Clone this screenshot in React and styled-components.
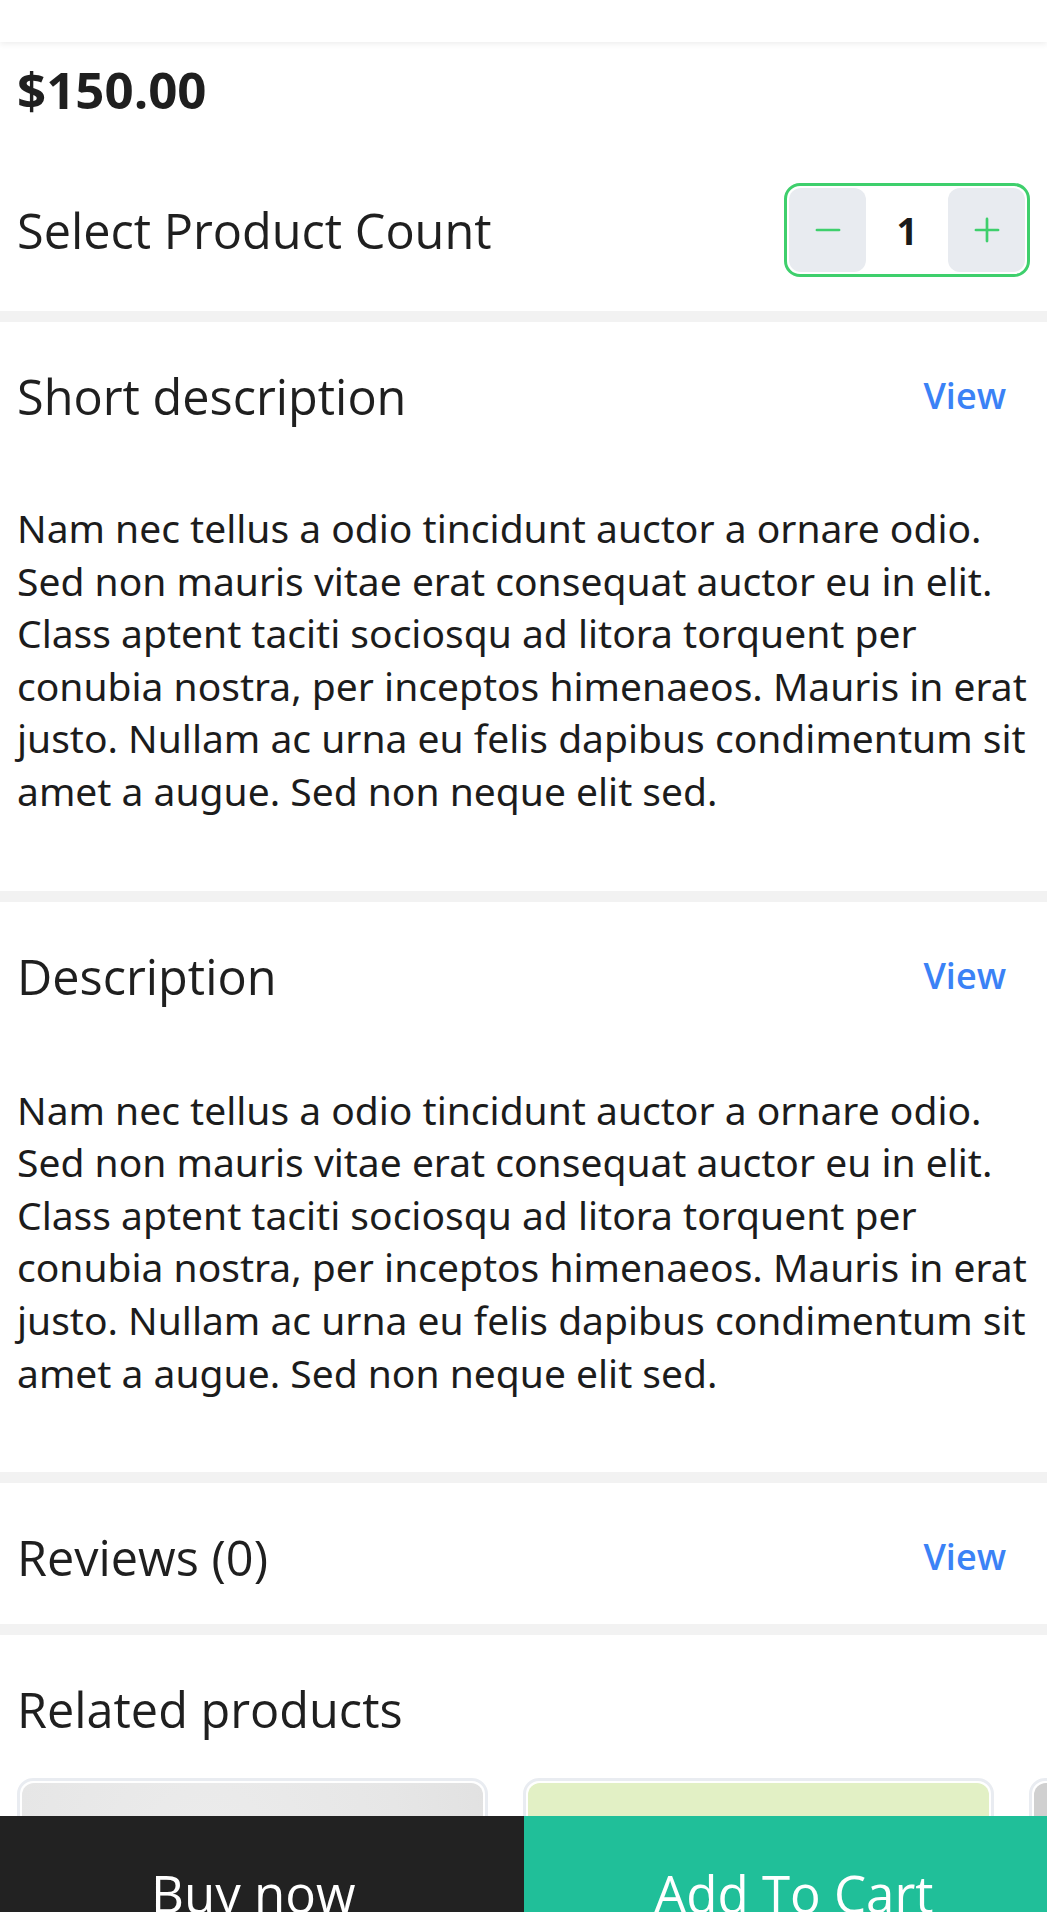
import React, { useState } from "react";
import styled, { createGlobalStyle } from "styled-components";
import { Minus, Plus } from "lucide-react";

const GlobalStyle = createGlobalStyle`
    * { box-sizing: border-box; }
    body {
        margin: 0;
        background: #ffffff;
        color: #1f1f1f;
        font-family: "Open Sans", "Noto Sans", sans-serif;
    }
`;

const TEXT =
    "Nam nec tellus a odio tincidunt auctor a ornare odio. Sed non mauris vitae erat consequat auctor eu in elit. Class aptent taciti sociosqu ad litora torquent per conubia nostra, per inceptos himenaeos. Mauris in erat justo. Nullam ac urna eu felis dapibus condimentum sit amet a augue. Sed non neque elit sed.";

/* TOPO */
const Header = styled.header`
    height: 42px;
    background: #ffffff;
    box-shadow: 0 2px 6px rgba(0, 0, 0, 0.07);
    position: relative;
    z-index: 2;
`;

const PriceBox = styled.div`
    padding: 12px 17px 0;
`;

const Price = styled.div`
    font-family: "Open Sans", sans-serif;
    font-weight: 700;
    font-size: 51px;
    line-height: 70px;
    color: #1f1f1f;
`;

const CountRow = styled.div`
    display: flex;
    align-items: center;
    justify-content: space-between;
    margin-top: 59px;
    padding: 0 17px 34px;
`;

/* CONTADOR */
const Stepper = styled.div`
    width: 246px;
    height: 94px;
    border: 3px solid #3ecf6c;
    border-radius: 16px;
    padding: 2px;
    display: flex;
    align-items: stretch;
`;

const StepButton = styled.button`
    width: 77px;
    border: none;
    border-radius: 12px;
    background: #e8ebf0;
    color: #3ecf6c;
    display: flex;
    align-items: center;
    justify-content: center;
    padding: 0;
    cursor: pointer;
`;

const Count = styled.span`
    flex: 1;
    display: flex;
    align-items: center;
    justify-content: center;
    font-family: "Open Sans", sans-serif;
    font-weight: 700;
    font-size: 37px;
    color: #1a1a1a;
`;

const Divider = styled.div`
    height: 11px;
    background: #f2f2f2;
`;

/* SEÇÕES */
const Section = styled.section`
    padding: ${(p) => p.$top || 41}px 17px ${(p) => p.$bottom || 0}px;
`;

const SectionHead = styled.div`
    display: flex;
    align-items: center;
    justify-content: space-between;
`;

const Heading = styled.h2`
    margin: 0;
    font-family: "Open Sans", sans-serif;
    font-weight: 400;
    font-size: 48.6px;
    line-height: 66px;
    color: #1f1f1f;
`;

const ViewLink = styled.a`
    font-family: "Open Sans", sans-serif;
    font-weight: 600;
    font-size: 36px;
    line-height: 66px;
    color: #3b82f6;
    margin-right: 24px;
    text-decoration: none;
    cursor: pointer;
`;

const Paragraph = styled.p`
    margin: ${(p) => p.$gap || 73}px 0 0;
    font-family: "Noto Sans", "Open Sans", sans-serif;
    font-size: 39px;
    line-height: 52.6px;
    color: #1c1c1c;
`;

/* PRODUTOS RELACIONADOS */
const Cards = styled.div`
    display: flex;
    gap: 35px;
    margin-top: 36px;
    padding-left: 17px;
    overflow: hidden;
`;

const Card = styled.div`
    flex-shrink: 0;
    width: 471px;
    height: 420px;
    border: 3px solid #e9ecf1;
    border-radius: 16px;
    padding: 2px;
`;

const CardImage = styled.div`
    height: 100%;
    border-radius: 12px;
    background: ${(p) => p.$bg};
`;

/* BARRA INFERIOR */
const BottomBar = styled.div`
    position: fixed;
    left: 0;
    right: 0;
    bottom: 0;
    height: 96px;
    display: flex;
    overflow: hidden;
    z-index: 10;
`;

const BarButton = styled.button`
    flex: 1;
    border: none;
    background: ${(p) => (p.$primary ? "#20bf99" : "#222222")};
    color: #ffffff;
    font-family: "Open Sans", sans-serif;
    font-weight: 400;
    font-size: 51px;
    line-height: 66px;
    padding: ${(p) => (p.$primary ? "44px 0 0 17px" : "44px 17px 0 0")};
    display: flex;
    justify-content: center;
    align-items: flex-start;
    cursor: pointer;
`;

const related = [
    "radial-gradient(ellipse at 40% 20%, #ececec 0%, #e6e6e6 50%, #dcdcdc 100%)",
    "#e2f0c5",
    "#d0d0d0",
];

export default function App() {
    const [count, setCount] = useState(1);

    return (
        <>
            <GlobalStyle />
            <Header />

            <PriceBox>
                <Price>$150.00</Price>
            </PriceBox>

            <CountRow>
                <Heading>Select Product Count</Heading>
                <Stepper>
                    <StepButton onClick={() => setCount((c) => Math.max(1, c - 1))}>
                        <Minus size={38} strokeWidth={1.7} />
                    </StepButton>
                    <Count>{count}</Count>
                    <StepButton onClick={() => setCount((c) => c + 1)}>
                        <Plus size={38} strokeWidth={1.7} />
                    </StepButton>
                </Stepper>
            </CountRow>
            <Divider />

            <Section $bottom={73}>
                <SectionHead>
                    <Heading>Short description</Heading>
                    <ViewLink>View</ViewLink>
                </SectionHead>
                <Paragraph>{TEXT}</Paragraph>
            </Section>
            <Divider />

            <Section $bottom={73}>
                <SectionHead>
                    <Heading>Description</Heading>
                    <ViewLink>View</ViewLink>
                </SectionHead>
                <Paragraph $gap={75}>{TEXT}</Paragraph>
            </Section>
            <Divider />

            <Section $bottom={34}>
                <SectionHead>
                    <Heading>Reviews (0)</Heading>
                    <ViewLink>View</ViewLink>
                </SectionHead>
            </Section>
            <Divider />

            <Section>
                <Heading>Related products</Heading>
            </Section>
            <Cards>
                {related.map((bg, i) => (
                    <Card key={i}>
                        <CardImage $bg={bg} />
                    </Card>
                ))}
            </Cards>

            <BottomBar>
                <BarButton>Buy now</BarButton>
                <BarButton $primary>Add To Cart</BarButton>
            </BottomBar>
        </>
    );
}
